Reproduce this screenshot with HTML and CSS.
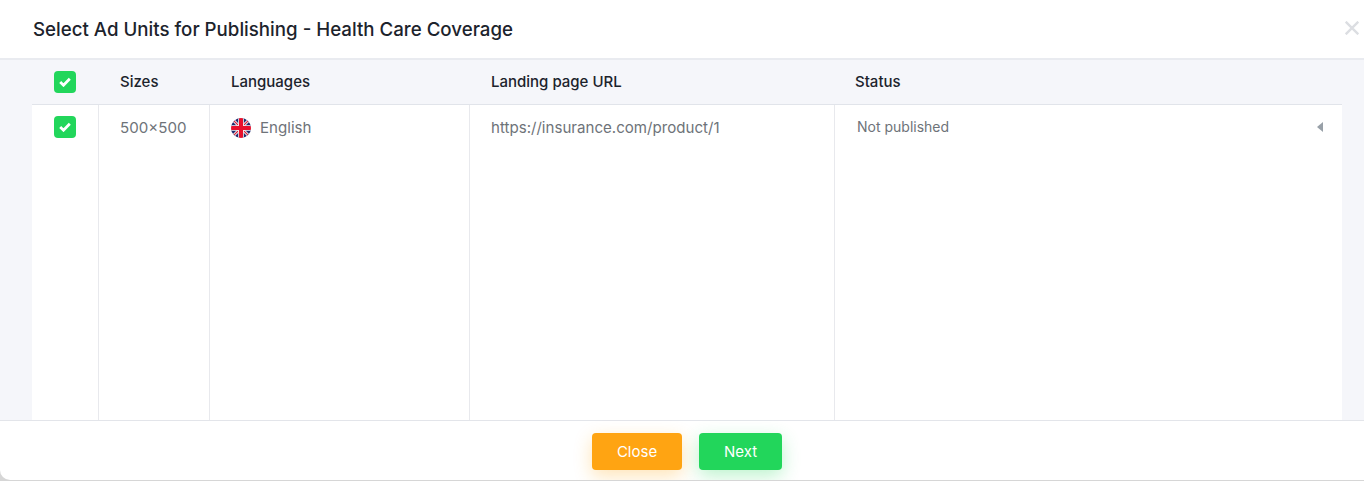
FILE: index.html
```html
<!DOCTYPE html>
<html lang="en">
<head>
<meta charset="utf-8">
<title>Select Ad Units</title>
<link rel="stylesheet" href="styles.css">
</head>
<body>
<div class="modal">
  <header class="modal-header">
    <h1 class="modal-title">Select Ad Units for Publishing - Health Care Coverage</h1>
    <button class="close-x" aria-label="Close">
      <svg width="14" height="14" viewBox="0 0 14 14"><path d="M0.7 0.7L13.3 13.3M13.3 0.7L0.7 13.3" stroke="#dcdee2" stroke-width="2.4" fill="none"/></svg>
    </button>
  </header>
  <main class="modal-body">
    <div class="table">
      <div class="cell head check-cell"><span class="check"><svg width="12" height="10" viewBox="0 0 12 10"><path d="M1.2 5L4.5 8.2L10.8 1.8" stroke="#fff" stroke-width="2.8" fill="none"/></svg></span></div>
      <div class="cell head">Sizes</div>
      <div class="cell head">Languages</div>
      <div class="cell head">Landing page URL</div>
      <div class="cell head head-last">Status</div>

      <div class="cell data check-cell"><span class="check"><svg width="12" height="10" viewBox="0 0 12 10"><path d="M1.2 5L4.5 8.2L10.8 1.8" stroke="#fff" stroke-width="2.8" fill="none"/></svg></span></div>
      <div class="cell data">500×500</div>
      <div class="cell data lang">
        <svg class="flag" width="20" height="20" viewBox="0 0 20 20">
          <defs><clipPath id="round"><circle cx="10" cy="10" r="10"/></clipPath></defs>
          <g clip-path="url(#round)">
            <rect width="20" height="20" fill="#1f2a6e"/>
            <path d="M0 0L20 20M20 0L0 20" stroke="#f4f4f4" stroke-width="3"/>
            <path d="M0 0L20 20M20 0L0 20" stroke="#d8203a" stroke-width="1.2"/>
            <path d="M10 0V20M0 10H20" stroke="#f4f4f4" stroke-width="5.6"/>
            <path d="M10 0V20M0 10H20" stroke="#e8102c" stroke-width="4"/>
          </g>
        </svg>
        <span>English</span>
      </div>
      <div class="cell data">https://insurance.com/product/1</div>
      <div class="cell data status">
        <span>Not published</span>
        <svg width="6" height="10" viewBox="0 0 6 10"><path d="M6 0V10L0 5Z" fill="#98a0a8"/></svg>
      </div>
    </div>
  </main>
  <footer class="modal-footer">
    <button class="btn btn-orange">Close</button>
    <button class="btn btn-green">Next</button>
  </footer>
</div>
</body>
</html>
```

FILE: styles.css
```css
* { box-sizing: border-box; }
html, body { margin: 0; height: 481px; overflow: hidden; background: #d6d6d6; }
body { font-family: Inter, "Liberation Sans", sans-serif; color: #1c232c; }

.modal {
  height: 480px;
  display: flex;
  flex-direction: column;
  background: #fff;
  border-radius: 0 0 0 10px;
  overflow: hidden;
}

.modal-header {
  height: 60px;
  flex: none;
  display: flex;
  align-items: center;
  justify-content: space-between;
  padding: 0 5px 0 33px;
  border-bottom: 2px solid #e9ebf0;
}
.modal-title { margin: 0; font-size: 18.7px; font-weight: 450; }
.close-x { display: flex; padding: 0; border: 0; margin-bottom: 2px; background: none; }

.modal-body {
  flex: 1;
  min-height: 0;
  background: #f5f6fa;
  padding: 0 22px 0 32px;
}

.table {
  height: 100%;
  display: grid;
  grid-template-columns: 67px 111px 260px 365px 1fr;
  grid-template-rows: 45px 1fr;
}
.cell { font-size: 15px; line-height: 20px; padding-left: 21px; }
.head {
  display: flex;
  align-items: center;
  font-weight: 450;
  border-bottom: 1px solid #e1e4ea;
}
.head-last { padding-left: 20px; }
.data {
  background: #fff;
  color: #6e7379;
  font-size: 15.1px;
  padding-top: 13px;
  border-right: 1px solid #e8e9ed;
}
.data:last-child { border-right: 0; }

.check-cell { padding-left: 22px; }
.check {
  width: 22px;
  height: 22px;
  border-radius: 4px;
  background: #22d65b;
  display: flex;
  align-items: center;
  justify-content: center;
}
.data.check-cell { padding-top: 11px; }

.lang { display: flex; align-items: flex-start; gap: 9px; }
.flag { flex: none; }
.status {
  display: flex;
  justify-content: space-between;
  align-items: flex-start;
  font-size: 14px;
  padding-top: 12px;
  padding-left: 22px;
  padding-right: 19px;
}
.status svg { margin-top: 5px; }

.modal-footer {
  height: 60px;
  flex: none;
  display: flex;
  justify-content: center;
  gap: 17px;
  padding-top: 12px;
  padding-left: 10px;
  border-top: 1px solid #e3e5ea;
}
.btn {
  height: 37px;
  border: 0;
  border-radius: 4px;
  color: #fff;
  font: 400 15px Inter, "Liberation Sans", sans-serif;
}
.btn-orange { width: 90px; background: #ffa412; box-shadow: 0 6px 18px rgba(255, 164, 18, 0.3); }
.btn-green { width: 83px; background: #22d65b; box-shadow: 0 6px 18px rgba(34, 214, 91, 0.3); }
```
